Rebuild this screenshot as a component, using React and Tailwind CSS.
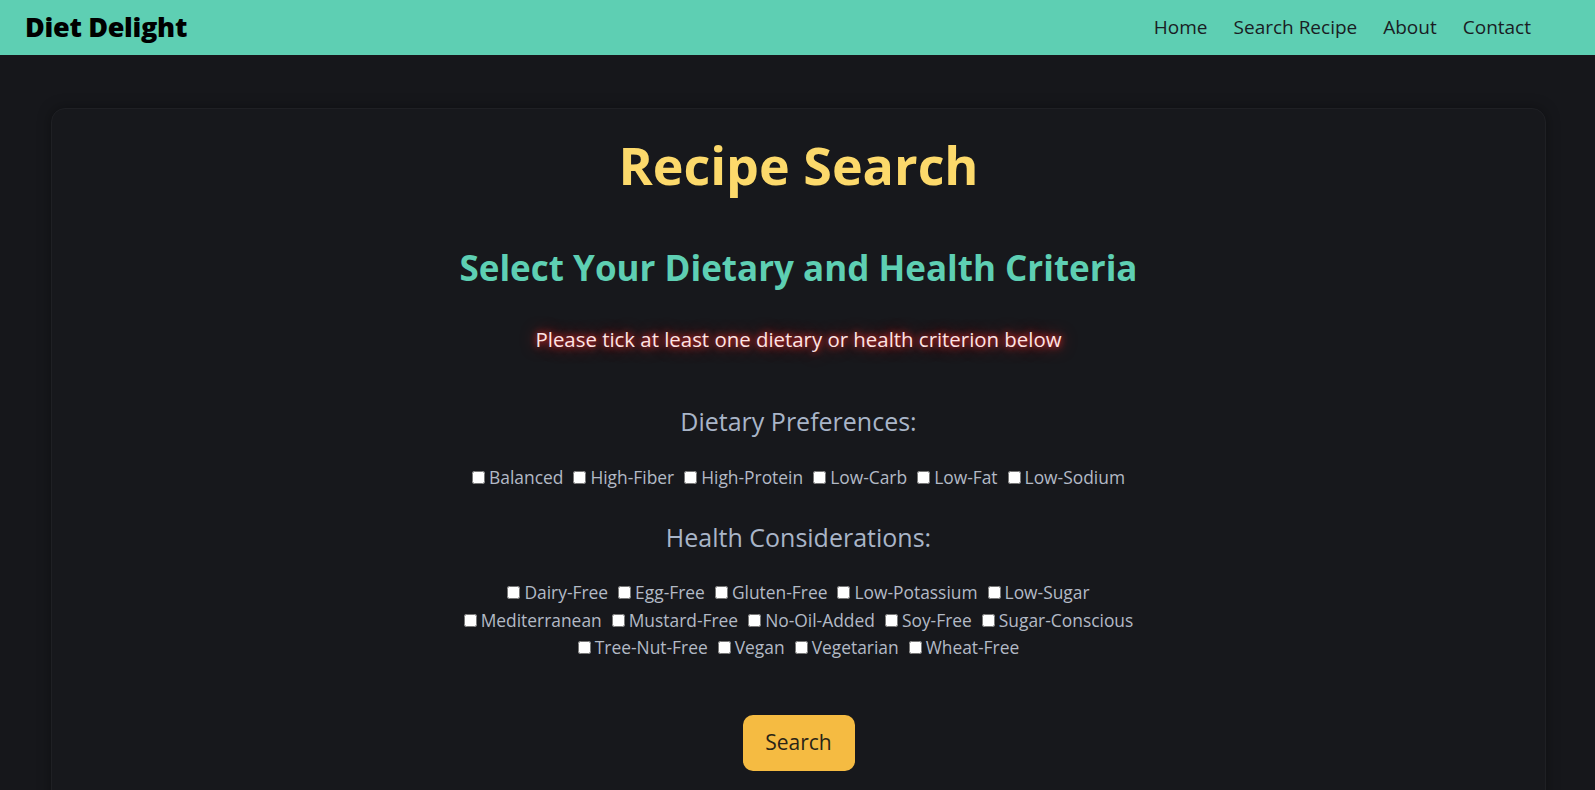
import React from "react";

const dietary = ["Balanced", "High-Fiber", "High-Protein", "Low-Carb", "Low-Fat", "Low-Sodium"];
const health = [
  ["Dairy-Free", "Egg-Free", "Gluten-Free", "Low-Potassium", "Low-Sugar"],
  ["Mediterranean", "Mustard-Free", "No-Oil-Added", "Soy-Free", "Sugar-Conscious"],
  ["Tree-Nut-Free", "Vegan", "Vegetarian", "Wheat-Free"],
];

function Check({ label }) {
  return (
    <label className="inline-flex items-center gap-[4px] text-[17.4px] text-[#b3bac6]">
      <input type="checkbox" className="w-[13px] h-[13px] m-0" />
      <span>{label}</span>
    </label>
  );
}

export default function App() {
  return (
    <div className="min-h-[790px] bg-[#16171b]" style={{ fontFamily: '"Open Sans", "Noto Sans", sans-serif' }}>
      <header className="h-[55px] bg-[#5ecfb3] flex items-center justify-between pl-[25px] pr-[64px]">
        <div className="text-[27px] font-extrabold text-black tracking-[-0.3px]">Diet Delight</div>
        <nav className="flex gap-[26px] text-[19px] text-[#1a1d24]">
          <a>Home</a>
          <a>Search Recipe</a>
          <a>About</a>
          <a>Contact</a>
        </nav>
      </header>
      <main className="pt-[53px] pl-[51px] pr-[49px]">
        <div className="rounded-[14px] bg-[#17181c] border border-[#1f2024] shadow-[0_0_14px_rgba(0,0,0,0.35)] pt-[25px] pb-[80px] flex flex-col items-center">
          <h1 className="text-[52px] font-bold text-[#fcd96b] leading-[62px]">Recipe Search</h1>
          <h2 className="mt-[50px] text-[35px] font-bold text-[#5ecfb3] leading-[44px]">Select Your Dietary and Health Criteria</h2>
          <p
            className="mt-[35px] text-[20.4px] text-[#fde4e4] leading-[28px]"
            style={{ textShadow: "0 0 7px #ff2a2a, 0 0 16px rgba(255,40,40,0.7)" }}
          >
            Please tick at least one dietary or health criterion below
          </p>
          <h3 className="mt-[51px] text-[25px] text-[#a9b5c8] leading-[34px]">Dietary Preferences:</h3>
          <div className="mt-[26px] flex flex-wrap justify-center gap-x-[10px] leading-[27px]">
            {dietary.map((d) => (
              <Check key={d} label={d} />
            ))}
          </div>
          <h3 className="mt-[29px] text-[25px] text-[#a9b5c8] leading-[34px]">Health Considerations:</h3>
          <div className="mt-[25px] flex flex-col items-center leading-[27.5px]">
            {health.map((row, i) => (
              <div key={i} className="flex justify-center gap-x-[10px]">
                {row.map((d) => (
                  <Check key={d} label={d} />
                ))}
              </div>
            ))}
          </div>
          <button className="mt-[53px] h-[56px] w-[112px] rounded-[10px] bg-[#f5bb42] text-[21px] text-[#2a2416]">
            Search
          </button>
        </div>
      </main>
    </div>
  );
}
